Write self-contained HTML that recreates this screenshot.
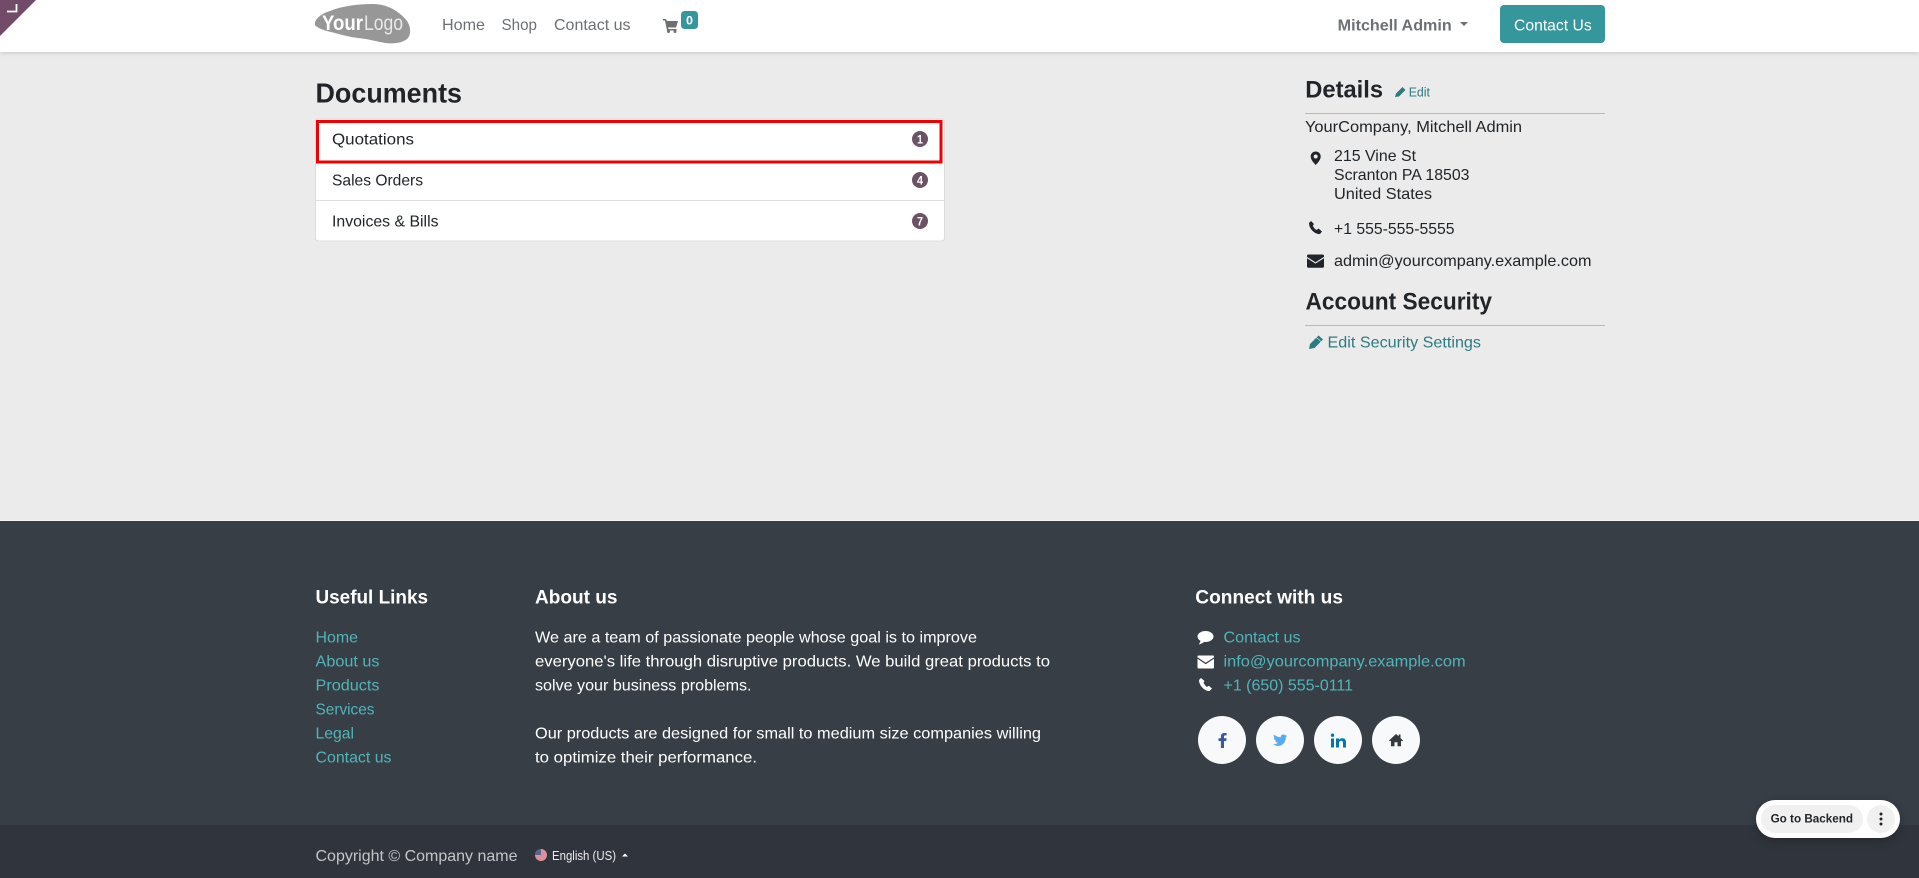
<!DOCTYPE html>
<html lang="en">
<head>
<meta charset="utf-8">
<title>Documents</title>
<style>
html,body{margin:0;padding:0;width:1919px;height:878px;overflow:hidden;background:#ebebeb}
svg{display:block;position:absolute;left:0;top:0}
text{font-family:"Liberation Sans",sans-serif;font-size:16px}
.nav{fill:#6c7074}
.d{fill:#212529}
.t{fill:#2c7c80}
.f{fill:#fff}
.l{fill:#4fb5ba}
.h{font-weight:bold;font-size:19px}
</style>
</head>
<body>
<svg width="1919" height="878" viewBox="0 0 1919 878" xmlns="http://www.w3.org/2000/svg">
<defs>
<filter id="s1" x="-5%" y="-20%" width="110%" height="160%"><feDropShadow dx="0" dy="1" stdDeviation="2" flood-color="#000" flood-opacity=".16"/></filter>
<filter id="s2" x="-20%" y="-40%" width="140%" height="200%"><feDropShadow dx="0" dy="3" stdDeviation="6" flood-color="#000" flood-opacity=".25"/></filter>
</defs>

<rect width="1919" height="878" fill="#ebebeb"/>

<!-- header -->
<rect width="1919" height="52" fill="#fff" filter="url(#s1)"/>
<path d="M0 0H36L0 36Z" fill="#714b67"/>
<path d="M7 11.5H16.5V4" fill="none" stroke="#fff" stroke-width="1.8"/>

<!-- logo -->
<path d="M315 22C317 17 323 13 330 11C342 6 358 4 373 4C388 4 400 12 407 21C411 27 411 34 408 38C403 43 395 44 385 43C375 41 368 39 358 38C350 37 342 35 335 33C327 31 318 29 315 25Z" fill="#979797"/>
<text x="322" y="30" textLength="41" lengthAdjust="spacingAndGlyphs" style="font-weight:bold;font-size:21px" fill="#fff">Your</text>
<text x="364" y="30" textLength="39" lengthAdjust="spacingAndGlyphs" style="font-size:21px" fill="#e9e9e9">Logo</text>

<!-- nav -->
<text class="nav" x="442" y="30" textLength="43" lengthAdjust="spacingAndGlyphs">Home</text>
<text class="nav" x="501.5" y="30" textLength="35.5" lengthAdjust="spacingAndGlyphs">Shop</text>
<text class="nav" x="554" y="30" textLength="76.5" lengthAdjust="spacingAndGlyphs">Contact us</text>
<path d="M663 19H666L667 21H678L676 27.5H668L668.6 29H676.5V30.5H667L665 20.5H663Z" fill="#6c7074"/>
<circle cx="668.5" cy="31.5" r="1.5" fill="#6c7074"/><circle cx="675" cy="31.5" r="1.5" fill="#6c7074"/>
<rect x="681" y="11" width="17" height="18" rx="3.5" fill="#35979c"/>
<text x="686" y="24.5" textLength="7" lengthAdjust="spacingAndGlyphs" style="font-size:12px;font-weight:bold" fill="#fff">0</text>

<text x="1337.7" y="30.3" textLength="114" lengthAdjust="spacingAndGlyphs" style="font-weight:bold" fill="#6c7074">Mitchell Admin</text>
<path d="M1460 22H1468L1464 26Z" fill="#6c7074"/>
<rect x="1500" y="5" width="105" height="38" rx="4" fill="#35979c"/>
<text class="f" x="1514" y="30.3" textLength="77.7" lengthAdjust="spacingAndGlyphs">Contact Us</text>

<!-- documents -->
<text class="d" x="315.5" y="102.3" textLength="146.5" lengthAdjust="spacingAndGlyphs" style="font-size:28px;font-weight:bold">Documents</text>
<rect x="315.5" y="119" width="629" height="122" rx="3" fill="#fff" stroke="#dcdcdc"/>
<path d="M316 200.5H944" stroke="#dedede"/>
<rect x="317.5" y="121.5" width="623.5" height="40.5" fill="none" stroke="#f00000" stroke-width="3"/>
<text class="d" x="332" y="144.5" textLength="82" lengthAdjust="spacingAndGlyphs">Quotations</text>
<text class="d" x="332" y="185.5" textLength="91" lengthAdjust="spacingAndGlyphs">Sales Orders</text>
<text class="d" x="332" y="226.7" textLength="106.5" lengthAdjust="spacingAndGlyphs">Invoices &amp; Bills</text>
<circle cx="920" cy="139" r="8" fill="#6b5365"/><circle cx="920" cy="180" r="8" fill="#6b5365"/><circle cx="920" cy="221" r="8" fill="#6b5365"/>
<text class="f" x="917" y="143.3" textLength="6" lengthAdjust="spacingAndGlyphs" style="font-size:12px;font-weight:bold">1</text>
<text class="f" x="917" y="184.3" textLength="6" lengthAdjust="spacingAndGlyphs" style="font-size:12px;font-weight:bold">4</text>
<text class="f" x="917" y="225.3" textLength="6" lengthAdjust="spacingAndGlyphs" style="font-size:12px;font-weight:bold">7</text>

<!-- details -->
<text class="d" x="1305.300" y="97.7" textLength="77.700" lengthAdjust="spacingAndGlyphs" style="font-size:24px;font-weight:bold">Details</text>
<path d="M1395 97L1396 93.500L1402.500 87L1405.500 90L1399 96.500Z" fill="#2c7c80"/>
<text class="t" x="1408.700" y="96.500" textLength="21.300" lengthAdjust="spacingAndGlyphs" style="font-size:12.500px">Edit</text>
<rect x="1305" y="113" width="300" height="1" fill="#b8b8b8"/>
<text class="d" x="1305" y="132" textLength="217" lengthAdjust="spacingAndGlyphs">YourCompany, Mitchell Admin</text>
<path fill-rule="evenodd" d="M1315.700 151.500C1312.700 151.500 1310.700 153.700 1310.700 156.500C1310.700 159.500 1313.700 163 1315.700 165C1317.700 163 1320.700 159.500 1320.700 156.500C1320.700 153.700 1318.700 151.500 1315.700 151.500ZM1315.700 154.500A2 2 0 1 1 1315.700 158.500A2 2 0 1 1 1315.700 154.500Z" fill="#212529"/>
<text class="d" x="1334" y="161.200" textLength="82" lengthAdjust="spacingAndGlyphs">215 Vine St</text>
<text class="d" x="1334" y="180.200" textLength="135.500" lengthAdjust="spacingAndGlyphs">Scranton PA 18503</text>
<text class="d" x="1334" y="199" textLength="98" lengthAdjust="spacingAndGlyphs">United States</text>
<path d="M1311 221L1309 223C1309 229 1315 234.500 1320 234L1322 231.500L1318.500 228.500L1316.500 230C1315 229 1313.500 227.500 1312.800 225.700L1314 224Z" fill="#212529"/>
<text class="d" x="1334" y="233.800" textLength="120.500" lengthAdjust="spacingAndGlyphs">+1 555-555-5555</text>
<rect x="1307" y="254.500" width="17" height="13.200" rx="1.500" fill="#212529"/>
<path d="M1307 257.500L1315.500 263L1324 257.500" fill="none" stroke="#ebebeb" stroke-width="1.100"/>
<text class="d" x="1334" y="266" textLength="257.500" lengthAdjust="spacingAndGlyphs">admin@yourcompany.example.com</text>
<text class="d" x="1305.500" y="309.500" textLength="186.500" lengthAdjust="spacingAndGlyphs" style="font-size:24px;font-weight:bold">Account Security</text>
<rect x="1305" y="325" width="300" height="1" fill="#b8b8b8"/>
<path d="M1309 349L1310 344L1318.500 335.500L1323 339.500L1314.500 348Z" fill="#2c7c80"/>
<path d="M1316.500 337.500L1321 341.500" stroke="#ebebeb" stroke-width=".6"/>
<text class="t" x="1327.500" y="347.700" textLength="153.500" lengthAdjust="spacingAndGlyphs">Edit Security Settings</text>

<!-- footer -->
<rect y="520" width="1919" height="305" fill="#383e46"/>
<rect y="825" width="1919" height="53" fill="#30343c"/>
<rect y="520" width="1919" height="1" fill="#f5f5f5"/>

<text class="f h" x="315.500" y="603.700" textLength="112.500" lengthAdjust="spacingAndGlyphs">Useful Links</text>
<text class="f h" x="535" y="603.700" textLength="82.500" lengthAdjust="spacingAndGlyphs">About us</text>
<text class="f h" x="1195.300" y="603.700" textLength="147.700" lengthAdjust="spacingAndGlyphs">Connect with us</text>

<text class="l" x="315.500" y="642.700" textLength="42.500" lengthAdjust="spacingAndGlyphs">Home</text>
<text class="l" x="315.500" y="666.700" textLength="64" lengthAdjust="spacingAndGlyphs">About us</text>
<text class="l" x="315.500" y="690.700" textLength="64" lengthAdjust="spacingAndGlyphs">Products</text>
<text class="l" x="315.500" y="714.700" textLength="59" lengthAdjust="spacingAndGlyphs">Services</text>
<text class="l" x="315.500" y="738.700" textLength="38.500" lengthAdjust="spacingAndGlyphs">Legal</text>
<text class="l" x="315.500" y="762.700" textLength="76" lengthAdjust="spacingAndGlyphs">Contact us</text>

<text class="f" x="535" y="642.700" textLength="442" lengthAdjust="spacingAndGlyphs">We are a team of passionate people whose goal is to improve</text>
<text class="f" x="535" y="666.700" textLength="515" lengthAdjust="spacingAndGlyphs">everyone's life through disruptive products. We build great products to</text>
<text class="f" x="535" y="690.700" textLength="216.500" lengthAdjust="spacingAndGlyphs">solve your business problems.</text>
<text class="f" x="535" y="738.700" textLength="506" lengthAdjust="spacingAndGlyphs">Our products are designed for small to medium size companies willing</text>
<text class="f" x="535" y="762.700" textLength="222" lengthAdjust="spacingAndGlyphs">to optimize their performance.</text>

<path d="M1205.500 631C1201 631 1197.500 633.500 1197.500 636.500C1197.500 638.300 1198.700 639.800 1200.500 640.800C1200.300 642 1199.700 643 1198.800 644.500C1201 644 1203 642.800 1204.300 641.900L1205.500 642C1210 642 1213.500 639.500 1213.500 636.500C1213.500 633.500 1210 631 1205.500 631Z" fill="#fff"/>
<text class="l" x="1223.500" y="642.700" textLength="77" lengthAdjust="spacingAndGlyphs">Contact us</text>
<rect x="1197.500" y="655.500" width="16.500" height="13" rx="1" fill="#fff"/>
<path d="M1197.500 658L1205.700 663.500L1214 658" fill="none" stroke="#383e46" stroke-width="1.200"/>
<text class="l" x="1223.500" y="666.700" textLength="242.100" lengthAdjust="spacingAndGlyphs">info@yourcompany.example.com</text>
<path d="M1201 678L1199 680C1199 685.500 1204.500 691.200 1209.500 691L1212 688.500L1208.800 685.700L1207 687C1205.500 686 1204 684.300 1203.500 682.800L1204.500 681Z" fill="#fff"/>
<text class="l" x="1223.500" y="690.700" textLength="129.500" lengthAdjust="spacingAndGlyphs">+1 (650) 555-0111</text>

<circle cx="1222" cy="740" r="24" fill="#f8f9fa"/>
<circle cx="1280" cy="740" r="24" fill="#f8f9fa"/>
<circle cx="1338" cy="740" r="24" fill="#f8f9fa"/>
<circle cx="1396" cy="740" r="24" fill="#f8f9fa"/>
<path d="M1224 748V741H1226.300L1226.600 738.300H1224V736.600C1224 735.800 1224.300 735.400 1225.100 735.400H1226.600V733.100C1226.100 733 1225.300 733 1224.500 733C1222.300 733 1220.900 734.300 1220.900 736.400V738.300H1218.500V741H1220.900V748Z" fill="#3b5998"/>
<path d="M1287 735.500C1286.500 735.800 1286 735.900 1285.400 736C1286 735.600 1286.400 735.100 1286.600 734.500C1286.100 734.800 1285.500 735 1284.900 735.200C1283.500 733.700 1280.800 734.600 1280.800 736.800V737.300C1278.300 737.200 1275.600 736.100 1273.800 734.500C1273.300 736 1274 737.500 1275.300 738.300C1274.800 738.300 1274.300 738.100 1274 737.900C1274 739.300 1275.100 740.500 1276.400 740.800C1276 740.900 1275.500 740.900 1275.100 740.800C1275.500 741.900 1276.600 742.700 1277.900 742.800C1276.400 743.900 1274.900 744.400 1273.200 744.200C1280.500 749 1286 743 1285.800 737.300C1286.300 736.900 1286.700 736.200 1287 735.500Z" fill="#55acee"/>
<path d="M1331 738.500H1334V747.500H1331ZM1332.500 733.500A1.700 1.700 0 1 1 1332.500 736.900A1.700 1.700 0 1 1 1332.500 733.500ZM1336 738.500H1339V739.800C1339.500 738.900 1340.600 738.200 1342 738.200C1345 738.200 1346 739.800 1346 742.300V747.500H1343V742.800C1343 741.500 1342.500 740.700 1341.300 740.700C1339.900 740.700 1339 741.600 1339 742.800V747.500H1336Z" fill="#0077b5"/>
<path d="M1396 734L1389 740.500L1390 741.500L1391 740.600V746.300H1394.500V742.300H1397.500V746.300H1401V740.600L1402 741.500L1403 740.500L1400.500 738V734.500H1398.700V736.300Z" fill="#343a40"/>

<text x="315.500" y="861" textLength="202" lengthAdjust="spacingAndGlyphs" fill="#c3c5c7">Copyright © Company name</text>
<circle cx="541" cy="855" r="6" fill="#d9929c"/>
<path d="M535 855A6 6 0 0 1 541 849V855Z" fill="#5b6491"/>
<text x="552" y="860" textLength="64" lengthAdjust="spacingAndGlyphs" style="font-size:12.500px" fill="#eceded">English (US)</text>
<path d="M622 856.500L625 853.500L628 856.500Z" fill="#fff"/>

<!-- go to backend -->
<rect x="1756" y="800" width="144" height="38" rx="19" fill="#fff" filter="url(#s2)"/>
<rect x="1761" y="805" width="102" height="28" rx="14" fill="#f0f0f0"/>
<rect x="1867" y="805" width="28" height="28" rx="14" fill="#f0f0f0"/>
<text x="1770.600" y="822.700" textLength="82.400" lengthAdjust="spacingAndGlyphs" style="font-size:12px;font-weight:bold" fill="#212529">Go to Backend</text>
<circle cx="1881" cy="814" r="1.500" fill="#212529"/><circle cx="1881" cy="819" r="1.500" fill="#212529"/><circle cx="1881" cy="824" r="1.500" fill="#212529"/>
</svg>
</body>
</html>
